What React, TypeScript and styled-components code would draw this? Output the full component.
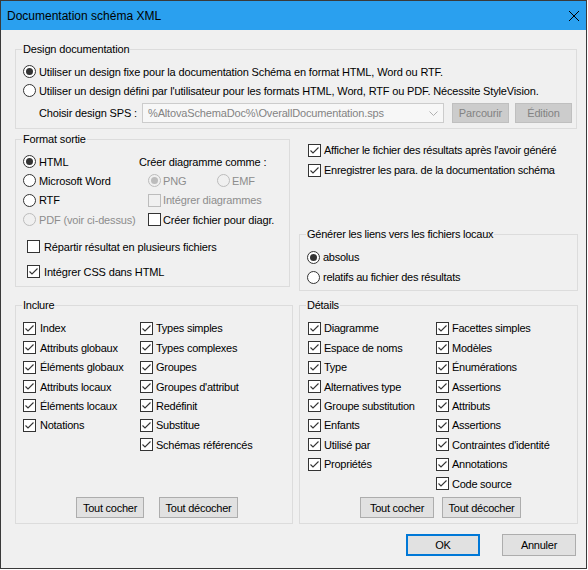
import React from "react";
import styled, { createGlobalStyle, css } from "styled-components";

const GlobalStyle = createGlobalStyle`
  html, body { margin: 0; padding: 0; background: #ffffff; }
  body {
    font-family: "Liberation Sans", Arial, sans-serif;
    font-size: 11px;
    letter-spacing: -0.15px;
    color: #000;
  }
  * { box-sizing: border-box; }
`;

// the right-hand and lower parts of the dialog use a tighter face
const narrowFont = css`
  letter-spacing: -0.25px;
`;

const Window = styled.div`
  width: 587px;
  height: 569px;
  border: 1px solid #3a3a3a;
  background: #f0f0f0;
  display: flex;
  flex-direction: column;
`;

const TitleBar = styled.div`
  height: 29px;
  background: #2aa0ef;
  display: flex;
  align-items: center;
  justify-content: space-between;
  padding-left: 6px;
  font-size: 12px;
  letter-spacing: 0;
`;

const CloseBtn = styled.div`
  width: 24px;
  height: 29px;
  display: flex;
  align-items: center;
  justify-content: center;
`;

const Body = styled.div`
  padding: 12px 0 0 14px;
  display: flex;
  flex-direction: column;
`;

const Group = styled.fieldset<{ $w: number; $h: number; $narrow?: boolean }>`
  width: ${(p) => p.$w}px;
  height: ${(p) => p.$h}px;
  margin: 0;
  padding: 0;
  min-width: 0;
  border: 1px solid #dcdcdc;
  display: flex;
  flex-direction: column;
  ${(p) => p.$narrow && narrowFont}
`;

const Legend = styled.legend`
  margin-left: 6px;
  padding: 0 1px;
  line-height: 15px;
`;

const GroupContent = styled.div<{ $pt: number; $pl: number }>`
  padding-top: ${(p) => p.$pt}px;
  padding-left: ${(p) => p.$pl}px;
  display: flex;
  flex-direction: column;
`;

const Row = styled.div<{ $h: number; $mt?: number; $pl?: number }>`
  height: ${(p) => p.$h}px;
  margin-top: ${(p) => p.$mt ?? 0}px;
  padding-left: ${(p) => p.$pl ?? 0}px;
  display: flex;
  align-items: center;
  white-space: nowrap;
`;

const Label = styled.span<{ $disabled?: boolean }>`
  color: ${(p) => (p.$disabled ? "#8d8d8d" : "#000")};
`;

const Box = styled.span<{ $disabled?: boolean; $gap: number }>`
  width: 13px;
  height: 13px;
  flex: none;
  margin-right: ${(p) => p.$gap}px;
  border: 1px solid ${(p) => (p.$disabled ? "#bcbcbc" : "#333")};
  background: ${(p) => (p.$disabled ? "#f0f0f0" : "#fff")};
  display: flex;
  align-items: center;
  justify-content: center;
`;

const Circle = styled(Box)`
  border-radius: 50%;
`;

const Dot = styled.span<{ $disabled?: boolean }>`
  width: 7px;
  height: 7px;
  border-radius: 50%;
  background: ${(p) => (p.$disabled ? "#bcbcbc" : "#333")};
`;

type ItemProps = {
  label: string;
  checked?: boolean;
  disabled?: boolean;
  gap?: number;
};

const Check = ({ label, checked, disabled, gap = 4 }: ItemProps) => (
  <>
    <Box $disabled={disabled} $gap={gap}>
      {checked && (
        <svg width="11" height="11" viewBox="0 0 11 11">
          <path d="M1.5 5.5 L4 8 L9.5 2.5" fill="none" stroke="#333" strokeWidth="1.1" />
        </svg>
      )}
    </Box>
    <Label $disabled={disabled}>{label}</Label>
  </>
);

const Radio = ({ label, checked, disabled, gap = 3 }: ItemProps) => (
  <>
    <Circle $disabled={disabled} $gap={gap}>
      {checked && <Dot $disabled={disabled} />}
    </Circle>
    <Label $disabled={disabled}>{label}</Label>
  </>
);

const ComboLabel = styled.span`
  width: 103px;
  flex: none;
`;

const Combo = styled.div`
  width: 302px;
  height: 20px;
  margin-right: 8px;
  border: 1px solid #cccccc;
  background: #f7f7f7;
  color: #838383;
  display: flex;
  align-items: center;
  justify-content: space-between;
  padding: 0 5px 0 5px;
`;

const Button = styled.div<{ $w: number; $h?: number; $disabled?: boolean; $default?: boolean }>`
  width: ${(p) => p.$w}px;
  height: ${(p) => p.$h ?? 21}px;
  flex: none;
  display: flex;
  align-items: center;
  justify-content: center;
  background: ${(p) => (p.$disabled ? "#cccccc" : "#e1e1e1")};
  border: 1px solid ${(p) => (p.$disabled ? "#bfbfbf" : p.$default ? "#0078d7" : "#adadad")};
  color: ${(p) => (p.$disabled ? "#838383" : "#000")};
  ${(p) => p.$default && "box-shadow: inset 0 0 0 1px #0078d7;"}
`;

const Spacer = styled.span<{ $w: number }>`
  width: ${(p) => p.$w}px;
  flex: none;
`;

const MidRow = styled.div`
  display: flex;
  gap: 9px;
  margin-top: 3px;
`;

const FormatGrid = styled.div`
  display: grid;
  grid-template-columns: 116px 1fr;
  grid-auto-rows: 19.3px;
  align-items: center;
  white-space: nowrap;
`;

const Cell = styled.div<{ $pl?: number }>`
  display: flex;
  align-items: center;
  padding-left: ${(p) => p.$pl ?? 0}px;
`;

const Inline = styled.div<{ $w?: number }>`
  display: flex;
  align-items: center;
  ${(p) => p.$w && `width: ${p.$w}px;`}
`;

const RightColumn = styled.div`
  width: 279px;
  display: flex;
  flex-direction: column;
  padding-top: 8px;
  ${narrowFont}
`;

const RightChecks = styled.div`
  padding-left: 9px;
  margin-bottom: 47px;
`;

const BottomRow = styled.div`
  display: flex;
  gap: 6px;
  margin-top: 7px;
`;

const Columns = styled.div`
  display: flex;
`;

const Column = styled.div<{ $w?: number }>`
  display: flex;
  flex-direction: column;
  ${(p) => p.$w && `width: ${p.$w}px;`}
`;

const ButtonRow = styled.div<{ $pl: number; $gap: number }>`
  margin-top: auto;
  margin-bottom: 5px;
  padding-left: ${(p) => p.$pl}px;
  display: flex;
  gap: ${(p) => p.$gap}px;
`;

const Footer = styled.div`
  display: flex;
  gap: 22px;
  margin-top: 10px;
  margin-left: 391px;
  ${narrowFont}
`;

const ROW = 19.45;

const inclureLeft = [
  "Index",
  "Attributs globaux",
  "Éléments globaux",
  "Attributs locaux",
  "Éléments locaux",
  "Notations",
];
const inclureRight = [
  "Types simples",
  "Types complexes",
  "Groupes",
  "Groupes d'attribut",
  "Redéfinit",
  "Substitue",
  "Schémas référencés",
];
const detailsLeft = [
  "Diagramme",
  "Espace de noms",
  "Type",
  "Alternatives type",
  "Groupe substitution",
  "Enfants",
  "Utilisé par",
  "Propriétés",
];
const detailsRight = [
  "Facettes simples",
  "Modèles",
  "Énumérations",
  "Assertions",
  "Attributs",
  "Assertions",
  "Contraintes d'identité",
  "Annotations",
  "Code source",
];

const CheckList = ({ items, w, gap }: { items: string[]; w?: number; gap: number }) => (
  <Column $w={w}>
    {items.map((it, i) => (
      <Row key={i} $h={ROW}>
        <Check label={it} checked gap={gap} />
      </Row>
    ))}
  </Column>
);

export default function App() {
  return (
    <>
      <GlobalStyle />
      <Window>
        <TitleBar>
          <span>Documentation schéma XML</span>
          <CloseBtn>
            <svg width="10" height="10" viewBox="0 0 10 10">
              <path d="M0 0 L10 10 M10 0 L0 10" stroke="#000" strokeWidth="1" />
            </svg>
          </CloseBtn>
        </TitleBar>

        <Body>
          <Group $w={562} $h={87}>
            <Legend>Design documentation</Legend>
            <GroupContent $pt={5} $pl={7}>
              <Row $h={19}>
                <Radio
                  checked
                  label="Utiliser un design fixe pour la documentation Schéma en format HTML, Word ou RTF."
                />
              </Row>
              <Row $h={19}>
                <Radio label="Utiliser un design défini par l'utilisateur pour les formats HTML, Word, RTF ou PDF. Nécessite StyleVision." />
              </Row>
              <Row $h={20} $mt={3} $pl={16}>
                <ComboLabel>Choisir design SPS :</ComboLabel>
                <Combo>
                  <span>%AltovaSchemaDoc%\OverallDocumentation.sps</span>
                  <svg width="9" height="5" viewBox="0 0 9 5">
                    <path d="M0.5 0.5 L4.5 4.5 L8.5 0.5" fill="none" stroke="#b0b0b0" strokeWidth="1" />
                  </svg>
                </Combo>
                <Button $w={57} $h={20} $disabled>
                  Parcourir
                </Button>
                <Spacer $w={6} />
                <Button $w={57} $h={20} $disabled>
                  Édition
                </Button>
              </Row>
            </GroupContent>
          </Group>

          <MidRow>
            <Group $w={275} $h={155}>
              <Legend>Format sortie</Legend>
              <GroupContent $pt={5} $pl={7}>
                <FormatGrid>
                  <Cell>
                    <Radio checked label="HTML" />
                  </Cell>
                  <Cell>Créer diagramme comme :</Cell>
                  <Cell>
                    <Radio label="Microsoft Word" />
                  </Cell>
                  <Cell $pl={9}>
                    <Inline $w={69}>
                      <Radio checked disabled gap={2} label="PNG" />
                    </Inline>
                    <Inline>
                      <Radio disabled gap={2} label="EMF" />
                    </Inline>
                  </Cell>
                  <Cell>
                    <Radio label="RTF" />
                  </Cell>
                  <Cell $pl={9}>
                    <Check disabled gap={2} label="Intégrer diagrammes" />
                  </Cell>
                  <Cell>
                    <Radio disabled label="PDF (voir ci-dessus)" />
                  </Cell>
                  <Cell $pl={9}>
                    <Check gap={2} label="Créer fichier pour diagr." />
                  </Cell>
                </FormatGrid>
                <Row $h={19} $mt={8} $pl={4}>
                  <Check label="Répartir résultat en plusieurs fichiers" />
                </Row>
                <Row $h={19} $mt={6} $pl={4}>
                  <Check checked label="Intégrer CSS dans HTML" />
                </Row>
              </GroupContent>
            </Group>

            <RightColumn>
              <RightChecks>
                <Row $h={20}>
                  <Check checked gap={3} label="Afficher le fichier des résultats après l'avoir généré" />
                </Row>
                <Row $h={20}>
                  <Check checked gap={3} label="Enregistrer les para. de la documentation schéma" />
                </Row>
              </RightChecks>
              <Group $w={279} $h={64} $narrow>
                <Legend>Générer les liens vers les fichiers locaux</Legend>
                <GroupContent $pt={5} $pl={7}>
                  <Row $h={20}>
                    <Radio checked label="absolus" />
                  </Row>
                  <Row $h={20}>
                    <Radio label="relatifs au fichier des résultats" />
                  </Row>
                </GroupContent>
              </Group>
            </RightColumn>
          </MidRow>

          <BottomRow>
            <Group $w={278} $h={226} $narrow>
              <Legend>Inclure</Legend>
              <GroupContent $pt={5.5} $pl={7}>
                <Columns>
                  <CheckList items={inclureLeft} w={117} gap={4} />
                  <CheckList items={inclureRight} gap={3} />
                </Columns>
              </GroupContent>
              <ButtonRow $pl={60} $gap={15}>
                <Button $w={68}>Tout cocher</Button>
                <Button $w={79}>Tout décocher</Button>
              </ButtonRow>
            </Group>

            <Group $w={279} $h={226} $narrow>
              <Legend>Détails</Legend>
              <GroupContent $pt={5.5} $pl={8}>
                <Columns>
                  <CheckList items={detailsLeft} w={128} gap={3} />
                  <CheckList items={detailsRight} gap={3} />
                </Columns>
              </GroupContent>
              <ButtonRow $pl={60} $gap={8}>
                <Button $w={74}>Tout cocher</Button>
                <Button $w={79}>Tout décocher</Button>
              </ButtonRow>
            </Group>
          </BottomRow>

          <Footer>
            <Button $w={74} $h={22} $default>
              OK
            </Button>
            <Button $w={74} $h={22}>
              Annuler
            </Button>
          </Footer>
        </Body>
      </Window>
    </>
  );
}
